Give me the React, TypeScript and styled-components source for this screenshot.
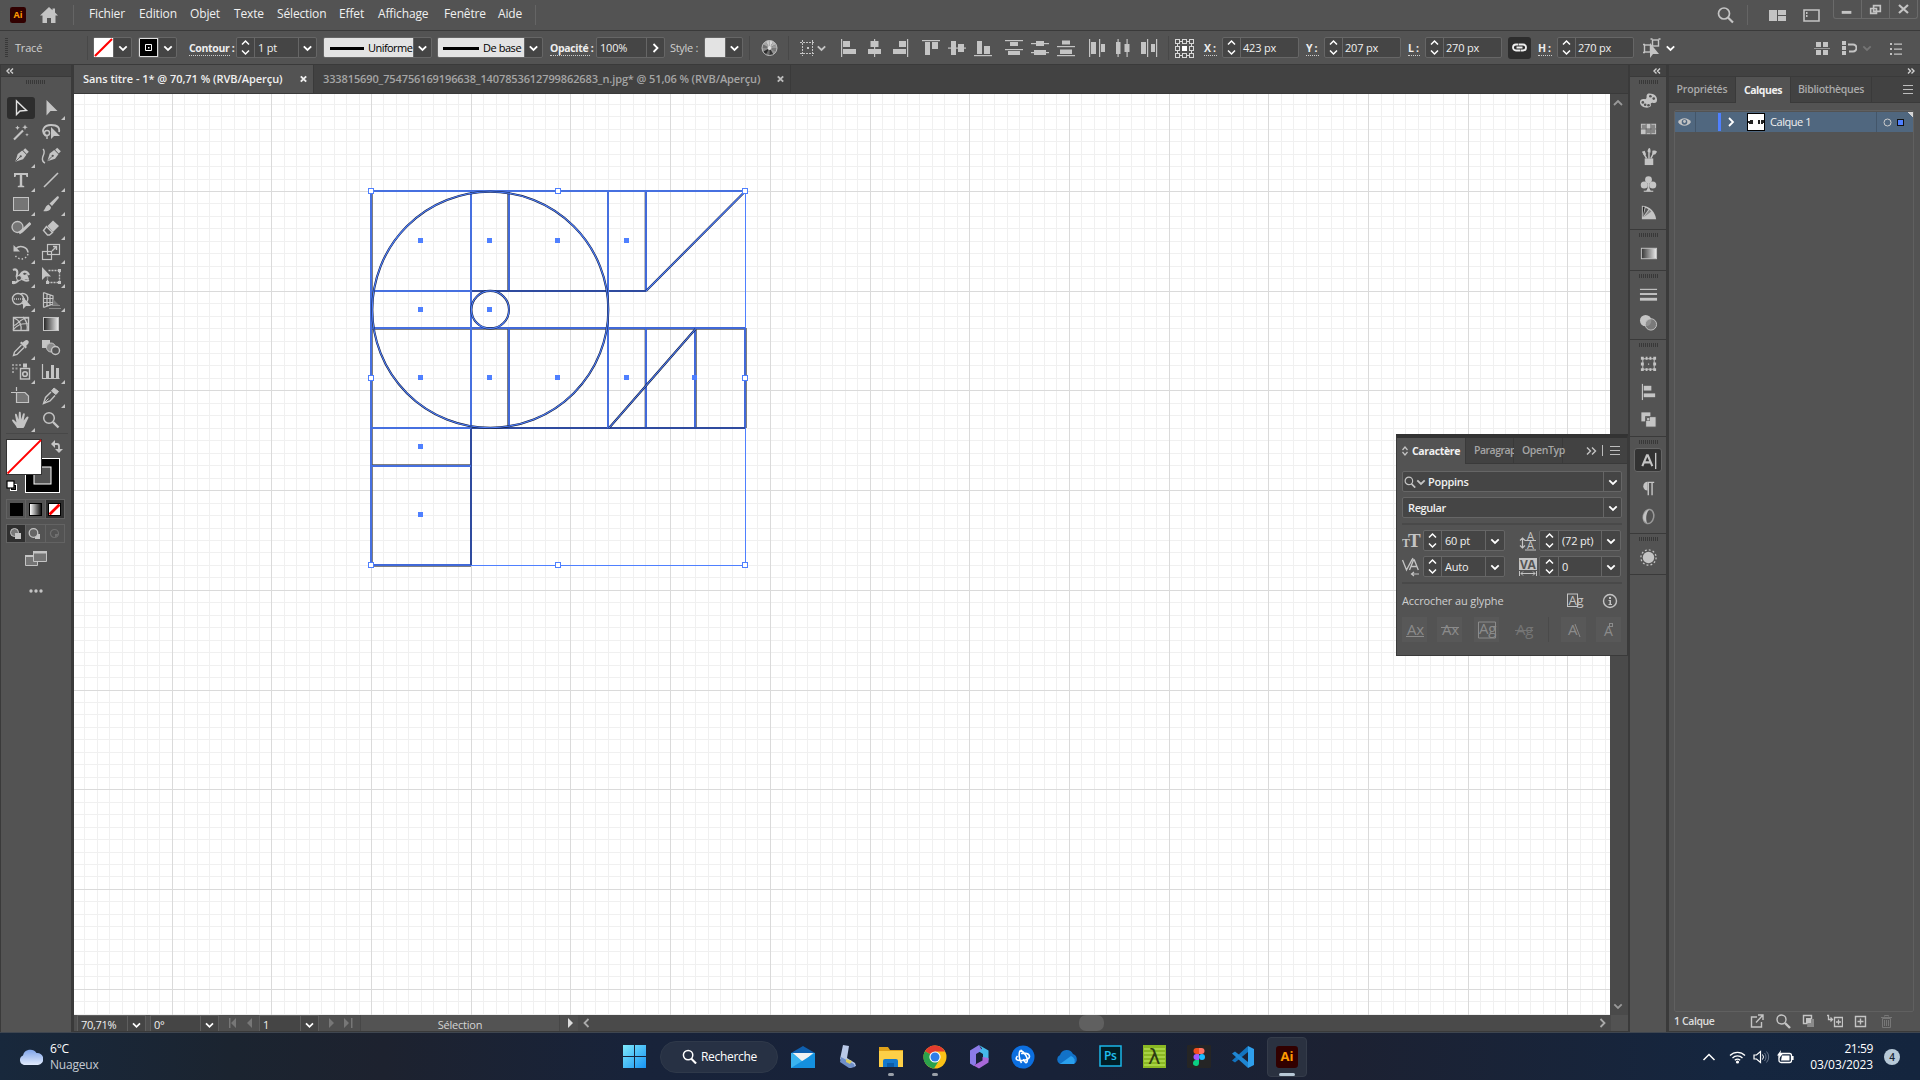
import React from "react";
import styled, { createGlobalStyle } from "styled-components";

const UI = `"Open Sans", "Noto Sans", sans-serif`;
const C = {
  bg: "#535353", dark: "#424242", line: "#3a3a3a", field: "#454545", edge: "#666666",
  icon: "#c4c4c4", text: "#f0f0f0", blue: "#4f80ff",
};

const Global = createGlobalStyle`
  html, body { margin: 0; padding: 0; background: ${C.bg}; overflow: hidden; }
  * { box-sizing: border-box; }
  body { font-family: ${UI}; font-stretch: 88%; font-size: 11px; color: ${C.text}; }
  svg { display: block; flex: none; }
`;

const Window = styled.div`width: 1920px; height: 1080px; display: flex; flex-direction: column; background: ${C.bg};`;

const Label = styled.span<{ $s?: number; $ls?: number; $c?: string; $w?: number; $b?: number; $ml?: number }>`
  font-size: ${p => p.$s ?? 11}px;
  letter-spacing: ${p => p.$ls ?? -0.2}px;
  color: ${p => p.$c ?? C.text};
  font-weight: ${p => p.$b ?? 400};
  margin-left: ${p => p.$ml ?? 0}px;
  ${p => (p.$w ? `width: ${p.$w}px;` : "")}
  white-space: nowrap;
  flex: none;
  line-height: 16px;
`;
const Gap = styled.div<{ $w: number }>`width: ${p => p.$w}px; flex: none;`;
const Grow = styled.div`flex: 1;`;

/* ---------- icons ---------- */
const Ico = ({ w = 20, h = 20, vw, vh, children, className }: any) => (
  <svg className={className} width={w} height={h} viewBox={`0 0 ${vw ?? w} ${vh ?? h}`} fill={C.icon}>{children}</svg>
);
const Chev = ({ w = 18, c = "#fff", dir = "down" }: { w?: number; c?: string; dir?: string }) => (
  <svg width={w} height={18} viewBox={`${-w / 2} -9 ${w} 18`} fill="none" stroke={c} strokeWidth="1.8">
    <path d={dir === "down" ? "M-3.700-1.700L0 2L3.700-1.700" : dir === "up" ? "M-4 2L0-2L4 2" : dir === "right" ? "M-2-4L2 0L-2 4" : "M2-4L-2 0L2 4"} />
  </svg>
);
const Dbl = ({ flip }: { flip?: boolean }) => (
  <svg width="8" height="6" viewBox="0 0 8 6" fill="none" stroke="#d0d0d0" strokeWidth="1.400">
    <path d={flip ? "M1 .5l2.500 2.500l-2.500 2.500M4.500 .5l2.500 2.500l-2.500 2.500" : "M3.500 .5l-2.500 2.500l2.500 2.500M7 .5l-2.500 2.500l2.500 2.500"} />
  </svg>
);
const Magnify = ({ s = 16, c = C.icon }: { s?: number; c?: string }) => (
  <svg width={s} height={s} viewBox="0 0 16 16" fill="none" stroke={c}>
    <circle cx="6.500" cy="6.500" r="5" strokeWidth="1.6" /><path d="M10 10.500L15 15.500" strokeWidth="2.200" />
  </svg>
);
const MenuLines = ({ c = "#bdbdbd" }: { c?: string }) => (
  <svg width="10" height="9" viewBox="0 0 10 9" fill="none" stroke={c} shapeRendering="crispEdges"><path d="M0 .5H10M0 4.500H10M0 8.500H10" /></svg>
);

/* ---------- menu bar ---------- */
const MenuBar = styled.div`height: 31px; flex: none; display: flex; align-items: flex-start; border-bottom: 1px solid ${C.line};`;
const AiBadge = styled.div<{ $s: number; $f: number }>`
  width: ${p => p.$s}px; height: ${p => p.$s}px; border-radius: ${p => p.$s / 7}px; background: #310000; color: #ff9a00;
  font-size: ${p => p.$f}px; line-height: ${p => p.$s - 1}px; font-weight: 700; text-align: center; flex: none;
`;
const VLine = styled.div<{ $h?: number; $c?: string; $mt?: number }>`
  width: 1px; height: ${p => p.$h ?? 20}px; margin-top: ${p => p.$mt ?? 0}px; background: ${p => p.$c ?? "#656565"}; flex: none;
`;
const MenuLogo = styled.div`display: flex; align-items: center; height: 30px; padding-left: 10px; width: 73px; gap: 14px;`;
const MenuItem = styled.span<{ $w: number }>`width: ${p => p.$w}px; flex: none; font-size: 12px; line-height: 28px; letter-spacing: -0.15px; white-space: nowrap;`;
const WinBtns = styled.div`
  display: flex; height: 19px; width: 85px; border: 1px solid #6a6a6a; border-top: 0; border-radius: 0 0 3px 3px;
  svg { width: 28px; border-right: 1px solid #6a6a6a; } svg:last-child { border: 0; width: 27px; }
`;
const menus: [string, number][] = [["Fichier", 50], ["Edition", 51], ["Objet", 44], ["Texte", 43], ["Sélection", 62], ["Effet", 39], ["Affichage", 66], ["Fenêtre", 54], ["Aide", 37]];

/* ---------- control bar ---------- */
const Control = styled.div`height: 34px; flex: none; display: flex; align-items: center; border-bottom: 1px solid ${C.line}; padding: 0 0 0 5px;`;
const Grip = styled.div<{ $v?: boolean }>`
  flex: none;
  ${p => p.$v
    ? "width: 3px; height: 19px; background: repeating-linear-gradient(180deg, #383838 0 1px, transparent 1px 2px);"
    : "width: 19px; height: 4px; background: repeating-linear-gradient(90deg, #383838 0 1px, transparent 1px 2px);"}
`;
const Field = styled.div<{ $w: number; $ml?: number; $mt?: number }>`
  width: ${p => p.$w}px; height: 21px; margin-left: ${p => p.$ml ?? 0}px; margin-top: ${p => p.$mt ?? 0}px; flex: none; display: flex; align-items: stretch;
  border: 1px solid ${C.edge}; border-radius: 2px; background: ${C.field}; overflow: hidden;
`;
const Seg = styled.div<{ $w?: number; $l?: boolean; $bg?: string; $p?: number }>`
  ${p => (p.$w ? `width: ${p.$w}px; flex: none;` : "flex: 1;")}
  display: flex; align-items: center; ${p => (p.$p !== undefined ? `padding-left: ${p.$p}px;` : "justify-content: center;")}
  ${p => (p.$l ? `border-left: 1px solid ${C.edge};` : "")}
  background: ${p => p.$bg ?? "transparent"};
`;
const Dotted = styled.span<{ $ml?: number; $w?: number }>`
  font-weight: 700; font-size: 10.5px; letter-spacing: -0.35px; line-height: 14px; color: #eee; border-bottom: 1px dotted #ccc; white-space: nowrap;
  margin-left: ${p => p.$ml ?? 0}px; margin-top: 1px; width: ${p => p.$w}px; flex: none;
`;
const Stepper = () => (
  <svg width="17" height="19" viewBox="0 0 17 19" fill="none" stroke="#fff" strokeWidth="1.5"><path d="M5 6.500l3.500-3.500l3.500 3.500M5 12.500l3.500 3.500l3.500-3.500" /></svg>
);
const Bar = styled.div<{ $w: number }>`width: ${p => p.$w}px; height: 3px; background: #000; margin: 2px 4px 0 0; flex: none;`;
const NumField = ({ v, ml, w = 77 }: { v: string; ml: number; w?: number }) => (
  <Field $w={w} $ml={ml}><Seg $w={17}><Stepper /></Seg><Seg $l $p={2}><Label>{v}</Label></Seg></Field>
);
const NoneSwatch = ({ s, b }: { s: number; b?: boolean }) => (
  <svg width={s} height={s} viewBox="0 0 20 20"><rect width="20" height="20" fill="#fff" /><path d="M1 19L19 1" stroke="#f00" strokeWidth={b ? 5 : 2.200} /></svg>
);
const LinkBtn = styled.div`width: 23px; height: 22px; margin-left: 6px; border-radius: 3px; background: #2d2d2d; display: flex; align-items: center; justify-content: center; flex: none;`;

const alignIcons: React.ReactNode[] = [
  <><rect x="1" width="1.200" height="18" /><rect x="3" y="2" width="7" height="6" /><rect x="3" y="10" width="13" height="5" /></>,
  <><rect x="8" width="1.200" height="18" /><rect x="4.500" y="2" width="8" height="6" /><rect x="2" y="10" width="13" height="5" /></>,
  <><rect x="15" width="1.200" height="18" /><rect x="7" y="2" width="7" height="6" /><rect x="1" y="10" width="13" height="5" /></>,
  <><rect y="1" width="18" height="1.200" /><rect x="3" y="3" width="5" height="13" /><rect x="10" y="3" width="6" height="7" /></>,
  <><rect y="8.500" width="18" height="1.200" /><rect x="3" y="2" width="5" height="14" /><rect x="10" y="5" width="6" height="8" /></>,
  <><rect y="16" width="18" height="1.200" /><rect x="3" y="2" width="5" height="13" /><rect x="10" y="7" width="6" height="8" /></>,
  <><rect y="1" width="18" height="1.200" /><rect x="5" y="3" width="8" height="4" /><rect y="10" width="18" height="1.200" /><rect x="3" y="12" width="12" height="4" /></>,
  <><rect y="4" width="18" height="1.200" /><rect x="5" y="2" width="8" height="5" /><rect y="13" width="18" height="1.200" /><rect x="3" y="11" width="12" height="5" /></>,
  <><rect y="7" width="18" height="1.200" /><rect x="5" y="1.500" width="8" height="4" /><rect y="16" width="18" height="1.200" /><rect x="3" y="10.500" width="12" height="4.500" /></>,
  <><rect x="1" width="1.200" height="18" /><rect x="3" y="3" width="5" height="12" /><rect x="11" width="1.200" height="18" /><rect x="13" y="5" width="4" height="8" /></>,
  <><rect x="3.500" width="1.200" height="18" /><rect x="2" y="3" width="4.500" height="12" /><rect x="12.500" width="1.200" height="18" /><rect x="10.500" y="5" width="5" height="8" /></>,
  <><rect x="7" width="1.200" height="18" /><rect x="1" y="3" width="5" height="12" /><rect x="16" width="1.200" height="18" /><rect x="11" y="5" width="4" height="8" /></>,
];
const AlignRow = styled.div<{ $ml: number; $g: number }>`display: flex; gap: ${p => p.$g}px; margin-left: ${p => p.$ml}px; flex: none;`;

const RefGrid = () => (
  <Ico w={20} h={20}>
    <g fill="none" stroke="#d8d8d8" strokeWidth="1.200" shapeRendering="crispEdges">
      {[1, 8, 15].map(x => [1, 8, 15].map(y => (x === 8 && y === 8 ? null : <rect key={`${x}${y}`} x={x + .5} y={y + .5} width="4" height="4" />)))}
      <path d="M5 3.500h3M12 3.500h3M5 17.500h3M12 17.500h3M3.500 5v3M3.500 12v3M17.500 5v3M17.500 12v3" />
    </g>
    <rect x="8" y="8" width="5" height="5" fill="#fff" />
  </Ico>
);

/* recolor wheel: twelve grey wedges round a light hub */
const wedgeTones = ["#d6d6d6", "#b4b4b4", "#9a9a9a", "#7a7a7a", "#8e8e8e", "#333", "#6a6a6a", "#2b2b2b", "#8a8a8a", "#6f6f6f", "#a5a5a5", "#c8c8c8"];
const Wheel = () => (
  <Ico w={17} h={18}>
    {wedgeTones.map((f, i) => {
      const a = ((i * 30 - 90) * Math.PI) / 180, b = ((i * 30 - 60) * Math.PI) / 180;
      return <path key={i} fill={f} d={`M8.500 9L${8.5 + 7.600 * Math.cos(a)} ${9 + 7.600 * Math.sin(a)}A7.600 7.600 0 0 1 ${8.5 + 7.600 * Math.cos(b)} ${9 + 7.600 * Math.sin(b)}z`} />;
    })}
    <circle cx="8.500" cy="9" r="7.500" fill="none" stroke="#bdbdbd" /><circle cx="8.500" cy="9" r="2" fill="#ddd" />
  </Ico>
);

/* ---------- workspace ---------- */
const Body = styled.div`height: 967px; flex: none; display: flex;`;
const ToolCol = styled.div`width: 74px; flex: none; border-left: 1px solid ${C.line}; border-right: 3px solid ${C.line}; display: flex; flex-direction: column; background: ${C.bg};`;
const Strip = styled.div<{ $r?: boolean }>`
  height: 12px; flex: none; background: ${C.dark}; border-bottom: 1px solid ${C.line}; display: flex; align-items: center;
  justify-content: ${p => (p.$r ? "flex-end" : "flex-start")}; padding: 0 5px;
`;
const GripWrap = styled.div`height: 7px; display: flex; align-items: flex-end; padding-left: 25px;`;
const ToolGrid = styled.div`display: grid; grid-template-columns: 30px 30px; grid-auto-rows: 24px; margin: 12px 0 0 5px;`;
const ToolCell = styled.div<{ $on?: boolean; $more?: boolean }>`
  position: relative; display: flex; align-items: center; justify-content: center;
  ${p => (p.$on ? "background: #2d2d2d; border-radius: 3px; margin: 1px 1px 1px 1px;" : "")}
  ${p => (p.$more ? `&::after { content: ""; position: absolute; right: 1px; bottom: 0; border: 2px solid ${C.icon}; border-top-color: transparent; border-left-color: transparent; }` : "")}
`;
const S = { fill: "none", stroke: C.icon, strokeWidth: 1.4 };
const pen = <g transform="rotate(45 10 10)"><rect x="7" y="0" width="6" height="3.500" /><path d="M6.500 4.500h7l1 6.500L10 19.500L5.500 11z" /><path d="M10 19V11.500" stroke={C.bg} strokeWidth="1" /><circle cx="10" cy="10.500" r="1.300" fill={C.bg} /></g>;
const tools: { i: React.ReactNode; m?: boolean; on?: boolean }[] = [
  { on: true, i: <path d="M5.500 3v13.500l3.500-3.500l6.500-.5z" {...S} stroke="#e2e2e2" /> },
  { m: true, i: <path d="M5.500 2v15.500l4-4.500h7z" /> },
  { i: <><path d="M3 17.500L12 8.500" {...S} strokeWidth="2.200" /><path d="M14 2.500l.8 2l2 .8l-2 .8l-.8 2l-.8-2l-2-.8l2-.8zM6.500 3.500l.7 1.600l1.600.7l-1.600.7l-.7 1.600l-.7-1.600l-1.600-.7l1.600-.7zM16 11l.5 1.300l1.300.5l-1.300.5l-.5 1.300l-.5-1.300l-1.300-.5l1.300-.5z" /></> },
  { i: <><path d="M5 14C-1 9 3 3 10 3s9 3 8 7" {...S} strokeWidth="1.800" /><circle cx="6" cy="11" r="2.500" {...S} /><path d="M6 13v4" {...S} /><path d="M10 5v12l3-3h6z" /></> },
  { m: true, i: <g transform="translate(1.500 1.500) scale(.85)">{pen}</g> },
  { i: <><g transform="translate(3.500 1) scale(.85)">{pen}</g><path d="M2 3C5 6 2 9 1.500 12S2 16 4 17" {...S} /></> },
  { m: true, i: <path d="M3 3h14v4h-1.500l-.6-2H11.200v10.500l2 .5v1.200H6.800V16l2-.5V5H5.100l-.6 2H3z" /> },
  { m: true, i: <path d="M3 17L17 3" {...S} strokeWidth="1.600" /> },
  { m: true, i: <rect x="2.500" y="3.500" width="15" height="13" fill="#757575" stroke={C.icon} /> },
  { m: true, i: <><path d="M17.500 2.500c1 1 0 2-1 3L11 12L8.500 9.500L15 3.500c1-1 1.700-1.700 2.500-1z" /><path d="M7.500 10.500l2.500 2.500c0 4-5 5-8 4c2-.5 2-5 5.500-6.500z" /></> },
  { m: true, i: <><circle cx="6.500" cy="9" r="5.500" fill="#757575" stroke={C.icon} strokeWidth="1.300" /><path d="M19.500 5L11 13l-3 2" {...S} strokeWidth="3" /></> },
  { m: true, i: <><path d="M12 2.500l6 5.500L12 14L6.500 8z" /><path d="M5.500 8.500L2.500 12.500l4 4.500h2l3-2.500z" {...S} /></> },
  { m: true, i: <><path d="M5 6.500A7 6.500 0 0 1 17 10.500" {...S} strokeWidth="1.600" /><path d="M2.500 3v6.500h6.500z" /><path d="M17 12a7 7 0 0 1-13 1" {...S} strokeDasharray="1.500 2" /></> },
  { m: true, i: <><rect x="6.500" y="2.500" width="12" height="10" {...S} strokeWidth="1.200" /><rect x="1.500" y="9.500" width="9" height="8" {...S} strokeWidth="1.200" /><path d="M11 9l4-4M12 4.500h3.500V8" {...S} /></> },
  { m: true, i: <><path d="M2 4c4-2 5 2 4 5s1 3 3 0s6-6 9 0M2 17c4 1 5-4 8-4s4 3 8 1" {...S} strokeWidth="2.200" /><path d="M11 6l2 3l3-1l2 5h-6l-3-3z" /><circle cx="8" cy="12" r="2.500" fill={C.bg} stroke={C.icon} /><rect x="1" y="15" width="3" height="3" /></> },
  { m: true, i: <><path d="M7.500 4.500h11v12h-12v-5" {...S} strokeDasharray="2 1" /><path d="M1 1v13l3.500-3.500H10z" /><path d="M17 3h3v3h-3zM17 15h3v3h-3zM5 15h3v3H5z" /></> },
  { m: true, i: <><circle cx="7" cy="9" r="5.500" {...S} /><path d="M9 4.500a5 5 0 1 1 2 9" {...S} /><path d="M3 9h12" {...S} strokeDasharray="1 1" /><path d="M12 7v12l3-3h5z" /></> },
  { m: true, i: <><path d="M2.500 2.500v15M2.500 2.500L12 6v8L2.500 17.500M6 4v12M9 5v10M2.500 8.500H12M2.500 12.500H12" {...S} strokeWidth="1.200" /><path d="M12 9l6 6H12z" fill="#777" /><path d="M8 18.500h12M11 15.500h8" stroke="#8a8a8a" /></> },
  { i: <><rect x="2.500" y="3.500" width="15" height="13" {...S} /><path d="M2 12c6-1 6-8 15-8M3 4c6 2 8 8 7 13M12 3c4 4 5 8 4 14M2 16c4-5 8-7 16-6" {...S} strokeWidth="1.200" /></> },
  { i: <><defs><linearGradient id="gt"><stop offset="0" stopColor="#222" /><stop offset="1" stopColor="#eee" /></linearGradient></defs><rect x="2.500" y="3.500" width="15" height="13" fill="url(#gt)" stroke={C.icon} /></> },
  { m: true, i: <><path d="M17 2.500c1.500 1.500.5 3-.5 4l-1.500 1.500l1 1l-1.500 1.500l-5.500-5.500L10.500 3.500l1 1l2-1.500c1-1 2.500-1.500 3.500-.5z" /><path d="M10.500 7L3.500 14L2.500 17.500l3.500-1L13 9.500" {...S} /></> },
  { i: <><rect x="1" y="2" width="8" height="8" /><circle cx="10" cy="9.500" r="4.500" fill="#8a8a8a" stroke={C.icon} /><circle cx="14.500" cy="12.500" r="4" fill={C.bg} stroke={C.icon} strokeWidth="1.400" /></> },
  { m: true, i: <><path d="M1 2h2v2H1zM4.500 2h2v2h-2zM8 2h2v2H8zM1 5.500h2v2H1zM4.500 5.500h2v2h-2zM1 9h2v2H1z" fill="#999" /><rect x="9.500" y="6.500" width="9" height="10.500" {...S} /><rect x="12" y="1.500" width="4" height="4" /><circle cx="14" cy="12" r="2.300" {...S} strokeWidth="1.600" /></> },
  { m: true, i: <><path d="M1.500 2v14.500h17" {...S} strokeWidth="1.200" /><path d="M5 9h3v7H5zM10 3h3v13h-3zM15 6h3v10h-3z" /></> },
  { i: <><path d="M0 6.500h5M5.500 1v4" {...S} strokeWidth="1.200" /><path d="M5.500 6.500h8.500l3.500 3.500v6.500h-12z" fill="#757575" stroke={C.icon} strokeWidth="1.200" /></> },
  { m: true, i: <><path d="M13 2l4.500 3.500l-2.500 3L10.500 5z" fill={C.icon} stroke={C.icon} /><path d="M10 6L4.500 11.500L2.500 17.500l6.500-2.500L14 9.500" {...S} /><path d="M2.500 17.500l5-5" {...S} strokeWidth="1" /></> },
  { m: true, i: <path d="M6 18c-1-3-4-5-5-7.500c0-1.500 1.700-1 2.500 0L5.500 12.500L4 5c-.2-1.500 1.500-1.700 1.900-.3L7.500 9.500L7.800 3c0-1.600 1.900-1.600 2 0l.4 6.500l1.700-5.500c.4-1.400 2.100-1 1.900.5L12.700 10.500L15.500 7c1-1.200 2.500-.3 1.900 1L14.500 14c-.5 2-1.500 3-2 4z" /> },
  { i: <><circle cx="8" cy="8" r="5.300" {...S} strokeWidth="1.500" /><path d="M12 12l5.500 5.500" {...S} strokeWidth="2.400" /></> },
];

const ToolBottom = styled.div`margin: 1px 3px 0 5px; border-top: 1px solid #484848; display: flex; flex-direction: column;`;
const Trio = styled.div<{ $mt: number; $h: number; $on: number }>`
  display: flex; width: 59px; height: ${p => p.$h}px; margin: ${p => p.$mt}px 0 0 0; border: 1px solid #636363;
  > div { flex: 1; display: flex; align-items: center; justify-content: center; border-right: 1px solid #636363; }
  > div:last-child { border: 0; }
  > div:nth-child(${p => p.$on}) { background: #2f2f2f; }
`;
const Chip = styled.div<{ $bg: string }>`width: 13px; height: 13px; border: 1px solid #000; background: ${p => p.$bg};`;
const ScreenMode = styled.div`margin: 8px 0 0 19px; display: flex; flex-direction: column; gap: 22px; svg:last-child { margin-left: 4px; }`;

/* ---------- document ---------- */
const DocCol = styled.div`width: 1554px; flex: none; display: flex; flex-direction: column; position: relative; background: ${C.dark};`;
const Tabs = styled.div`height: 29px; flex: none; display: flex; border-bottom: 1px solid ${C.line};`;
const Tab = styled.div<{ $w: number; $on?: boolean }>`
  width: ${p => p.$w}px; display: flex; align-items: center; justify-content: space-between; padding: 0 6px 0 9px;
  background: ${p => (p.$on ? C.bg : "transparent")}; border-right: 1px solid ${C.line};
`;
const CloseX = ({ c }: { c: string }) => (
  <svg width="7" height="8" viewBox="0 0 7 8" stroke={c} strokeWidth="1.900"><path d="M.8 1.300l5.400 5.400M6.200 1.300L.8 6.700" /></svg>
);
const CanvasRow = styled.div`height: 921px; flex: none; display: flex;`;
const VScroll = styled.div`width: 18px; background: #4a4a4a; display: flex; flex-direction: column; justify-content: space-between; align-items: center; flex: none; padding-right: 2px;`;
const Status = styled.div`height: 17px; flex: none; display: flex; align-items: stretch; background: #4f4f4f; border-bottom: 1px solid ${C.line}; overflow: hidden;`;
const StatusField = styled.div<{ $w: number; $ml: number }>`
  width: ${p => p.$w}px; height: 18px; margin-left: ${p => p.$ml}px; flex: none; display: flex; align-items: center; justify-content: space-between;
  background: ${C.field}; border: 1px solid #5e5e5e; border-bottom: 0; padding: 1px 0 0 3px; svg { border-left: 1px solid #5e5e5e; }
`;
const SelBox = styled.div`width: 200px; height: 18px; padding-top: 1px; margin-left: 4px; flex: none; border: 1px solid #474747; border-width: 0 1px; background: ${C.bg}; display: flex; align-items: center; justify-content: center;`;
const HScroll = styled.div`flex: 1; background: #4a4a4a; display: flex; align-items: center; border-right: 17px solid #525252;`;
const Thumb = styled.div`width: 25px; height: 16px; border-radius: 7px; background: #606060; flex: none;`;

const X0 = 74, Y0 = 94, CW = 1536, CH = 921;
const gridPath = (major: boolean) => {
  let d = "";
  for (let k = -24; k < 104; k++) {
    if ((k % 8 === 0) !== major) continue;
    const x = Math.floor(371.5 + k * 12.463) - X0 + 0.5;
    if (x > 0 && x < CW) d += `M${x} 0V${CH}`;
  }
  for (let k = -8; k < 70; k++) {
    if ((k % 8 === 0) !== major) continue;
    const y = Math.floor(191.5 + k * 12.463) - Y0 + 0.5;
    if (y > 0 && y < CH) d += `M0 ${y}H${CW}`;
  }
  return d;
};
const minorGrid = gridPath(false);
const majorGrid = gridPath(true);
const blueLines = "M371 191H745M371 191V565M471 191V428M608 191V428M371 291H471M371 328H471M371 428H471M371 466H471";
const mixLines = "M509 191V291M646 191V291M509 328V428M646 328V428M695 328V428M745 328V428M471 328H745M371 565H471";
const mixShade = "M507.500 191V291M645 191V291M507.500 328V428M645 328V428M696.500 328V428M746.500 328V428M471 329.500H745M371 566.500H471M371 329.500H471M371 464.500H471M372.500 191V565";
const deepLines = "M471 291H646M471 291V328M471 428H745M471 428V565";
const centers: [number, number][] = [[420, 240], [489, 240], [557, 240], [626, 240], [420, 309], [489, 309], [420, 377], [489, 377], [557, 377], [626, 377], [694, 377], [420, 446], [420, 514]];
const handles: [number, number][] = [[371, 191], [558, 191], [745, 191], [371, 378], [745, 378], [371, 565], [558, 565], [745, 565]];
const curves = (
  <>
    <circle cx="490.300" cy="309.700" r="118" /><circle cx="490.200" cy="309.700" r="18.800" /><path d="M646 291L745 191.500M609 428L695.500 329" />
  </>
);

const Artboard = () => (
  <svg width={CW} height={CH} viewBox={`${X0} ${Y0} ${CW} ${CH}`}>
    <rect x={X0} y={Y0} width={CW} height={CH} fill="#fff" />
    <g transform={`translate(${X0} ${Y0})`}>
      <path d={minorGrid} stroke="#f0f0f0" /><path d={majorGrid} stroke="#dadada" />
    </g>
    <g fill="none">
      <path d="M745.500 191V565.500H371" stroke={C.blue} />
      <path d={mixShade} stroke="#555" strokeOpacity=".75" />
      <path d={mixLines} stroke="#4169d8" strokeWidth="2" />
      <path d={deepLines} stroke="#2f4b9f" strokeWidth="2" />
      <path d={blueLines} stroke="#4670e0" strokeWidth="2" />
      <g stroke="#141c38" strokeWidth="2.100">{curves}</g>
      <g stroke={C.blue} strokeWidth="1.100">{curves}</g>
    </g>
    {centers.map(([x, y], i) => <rect key={i} x={x - 2} y={y - 2} width="5" height="5" fill={C.blue} />)}
    {handles.map(([x, y], i) => <rect key={i} x={x - 2.500} y={y - 2.500} width="5" height="5" fill="#fff" stroke={C.blue} />)}
  </svg>
);

/* ---------- character panel ---------- */
const CharPanel = styled.div`position: absolute; left: 1322px; top: 369px; width: 232px; height: 222px; background: ${C.bg}; border: 1px solid ${C.line}; border-top: 4px solid #333; display: flex; flex-direction: column;`;
const CharTabs = styled.div`height: 26px; flex: none; display: flex; align-items: stretch; background: ${C.dark};`;
const CharTab = styled.div<{ $w: number; $on?: boolean; $p: number }>`
  width: ${p => p.$w}px; flex: none; display: flex; align-items: center; padding: 0 0 1px ${p => p.$p}px; gap: 4px;
  background: ${p => (p.$on ? C.bg : C.dark)}; border-right: 1px solid ${C.line}; ${p => (p.$on ? "" : `border-bottom: 1px solid ${C.line};`)}
`;
const CharTail = styled.div`flex: 1; display: flex; align-items: center; border-bottom: 1px solid ${C.line}; padding-left: 23px;`;
const CharBody = styled.div`padding: 7px 5px 0; display: flex; flex-direction: column;`;
const CharRow = styled.div<{ $mt?: number }>`display: flex; align-items: center; margin-top: ${p => p.$mt ?? 0}px;`;
const HRule = styled.div<{ $m: string }>`height: 2px; background: #494949; margin: ${p => p.$m};`;
const GlyphBtn = styled.div<{ $ml: number; $flat?: boolean }>`
  width: 25px; height: 25px; margin-left: ${p => p.$ml}px; flex: none; display: flex; align-items: center; justify-content: center;
  background: ${p => (p.$flat ? "transparent" : "#585858")};
`;
const IcoText = ({ x = 0, y = 14, s = 13, c = C.icon, b = 400, children }: any) => (
  <text x={x} y={y} fontSize={s} fill={c} fontWeight={b} fontFamily="Open Sans, sans-serif" letterSpacing="-0.3">{children}</text>
);
const G = "#8b8b8b";

/* ---------- right docks ---------- */
const Dock = styled.div`width: 39px; flex: none; display: flex; flex-direction: column; border-left: 2px solid ${C.line}; border-right: 1px solid ${C.line};`;
const DockGroup = styled.div<{ $h: number }>`height: ${p => p.$h}px; flex: none; border-bottom: 1px solid ${C.line}; display: flex; flex-direction: column; align-items: center; padding-top: 3px;`;
const DockIcon = styled.div<{ $on?: boolean }>`
  width: 28px; height: 24px; margin-top: 4px; flex: none; display: flex; align-items: center; justify-content: center; border-radius: 3px;
  ${p => (p.$on ? "background: #333; border: 1px solid #666;" : "")}
`;
const dockGroups: { h: number; items: { on?: boolean; i: React.ReactNode }[] }[] = [
  { h: 153, items: [
    { i: <><path d="M11 2.500c5 0 8 3 8 6.500s-2 4-4 3.500s-3 .5-2.500 2s-1 3-4 3C4 17.500 1 15 1 11.500C1 9 3.500 8 5.500 8.500S8 7.500 8 6s0-3.500 3-3.500z" /><g fill={C.bg}><circle cx="12" cy="5.500" r="1.400" /><circle cx="15.500" cy="8" r="1.400" /><circle cx="4" cy="12" r="1.400" /><circle cx="6.500" cy="14.500" r="1.400" /><circle cx="10" cy="15" r="1.400" /></g></> },
    { i: <><rect x="2" y="5" width="16" height="11" /><g fill="#858585"><rect x="3" y="6" width="4" height="4" /><rect x="13" y="6" width="4" height="4" /><rect x="8" y="11" width="4" height="4" /><rect x="13" y="11" width="4" height="4" /></g><path d="M7.500 5v11M12.500 5v11M2 10.500h16" stroke={C.bg} strokeWidth=".8" /></> },
    { i: <><path d="M6 12h9v7H6z" /><path d="M10.500 12V4M8 12L5 7M12.500 12l3-6" {...S} strokeWidth="1.500" /><path d="M9 5c0-2 1-4 2-4s1.500 3 1 5zM3 5l3-1l1.500 4l-2 1zM14 4c3-1 4 0 5 1l-2 3h-3z" /></> },
    { i: <><circle cx="10" cy="5" r="3.600" /><circle cx="5.500" cy="10.500" r="3.700" /><circle cx="14.500" cy="10.500" r="3.700" /><path d="M9 8h2v6l1.500 3h-5L9 14z" /><rect x="5" y="16.500" width="10" height="1.200" /></> },
    { i: <><path d="M3 3c9 0 14 7 15 14H3z" /><path d="M4 4v11l2-11z" fill="#222" /><path d="M4 15L7 5l3 1.500z" fill="#555" /><path d="M5 15l6-8l2 2z" fill="#888" /></> },
  ] },
  { h: 41, items: [{ i: <><defs><linearGradient id="gd"><stop offset="0" stopColor="#333" /><stop offset="1" stopColor="#eee" /></linearGradient></defs><rect x="2.500" y="4.500" width="16" height="11" fill="url(#gd)" stroke={C.icon} /></> }] },
  { h: 69, items: [
    { i: <><rect x="1" y="4" width="18" height="1.200" /><rect x="1" y="8.500" width="18" height="2" /><rect x="1" y="13.500" width="18" height="3" /></> },
    { i: <><circle cx="7" cy="8" r="6" /><circle cx="12.500" cy="12" r="6" fill="#858585" fillOpacity=".8" stroke={C.icon} /></> },
  ] },
  { h: 97, items: [
    { i: <><rect x="4" y="5" width="12" height="11" {...S} strokeWidth="1" /><path d="M2 3h3v3H2zM7 3h2v3H7zM11 3h2v3h-2zM15 3h3v3h-3zM2 15h3v3H2zM7 15h2v3H7zM11 15h2v3h-2zM15 15h3v3h-3zM2 9h3v3H2zM15 9h3v3h-3zM9.500 10h1.200v1.200H9.500z" /></> },
    { i: <><rect x="3" y="2" width="1.200" height="17" /><rect x="5" y="4" width="8" height="5" /><rect x="5" y="12" width="12" height="4" /></> },
    { i: <><rect x="2.500" y="2.500" width="9.500" height="9.500" /><rect x="7" y="7" width="11" height="11" stroke={C.bg} /><rect x="7.500" y="7.500" width="4" height="4" fill={C.bg} /><rect x="8.500" y="8.500" width="2.500" height="2.500" /></> },
  ] },
  { h: 97, items: [
    { on: true, i: <><path d="M3.500 16L8.300 4.500h1L14 16M5.500 12h6.500" {...S} strokeWidth="2.200" /><rect x="17" y="2" width="1.200" height="17" fill="#e0e0e0" /></> },
    { i: <><path d="M9 3h7v1.200H9zM9 3h1.500v14H9zM13 3h1.500v14H13z" /><path d="M9 3a4.500 4.500 0 0 0 0 9z" /></> },
    { i: <><ellipse cx="10" cy="10" rx="5.500" ry="7.500" transform="rotate(12 10 10)" {...S} stroke="#999" strokeWidth="1.600" /><path d="M6 15C2 11 6 3 11 2.500C8 5 6.500 11 8.500 17z" /></> },
  ] },
  { h: 41, items: [{ i: <><circle cx="10" cy="10" r="6" /><circle cx="10" cy="10" r="8" {...S} strokeDasharray="2 2.200" strokeWidth="1.300" /></> }] },
];

const LayersPanel = styled.div`width: 253px; flex: none; display: flex; flex-direction: column; border-left: 2px solid ${C.line};`;
const PTabs = styled.div`height: 26px; flex: none; display: flex; background: ${C.dark};`;
const PTab = styled.div<{ $w: number; $on?: boolean }>`
  width: ${p => p.$w}px; flex: none; display: flex; align-items: center; justify-content: center; border-right: 1px solid ${C.line}; padding-bottom: 1px;
  ${p => (p.$on ? `background: ${C.bg};` : `border-bottom: 1px solid ${C.line};`)}
`;
const PTail = styled.div`flex: 1; display: flex; align-items: center; justify-content: flex-end; padding-right: 7px; border-bottom: 1px solid ${C.line};`;
const LayerList = styled.div`flex: 1; margin: 7px 6px 0 5px; border: 1px solid #606060; border-radius: 2px; display: flex; flex-direction: column;`;
const LayerRow = styled.div`
  height: 20px; margin-top: 1px; flex: none; background: #50677f; display: flex; align-items: center;
  background-image: linear-gradient(225deg, #d4d4d4 4px, transparent 4px);
`;
const BlueBar = styled.div`width: 3px; height: 18px; background: ${C.blue};`;
const SelDot = styled.div`width: 7px; height: 7px; background: ${C.blue}; border: 1px solid #111;`;
const Thumbnail = styled.div`width: 18px; height: 18px; background: #fff; border: 1px solid #000; display: flex; align-items: center; justify-content: center;`;
const LayerFoot = styled.div`height: 20px; flex: none; display: flex; align-items: center; border-bottom: 1px solid ${C.line}; padding: 0 25px 1px 5px;`;
const FootIcons = styled.div`display: flex; gap: 10px; margin-left: auto;`;

/* ---------- taskbar ---------- */
const Taskbar = styled.div`
  height: 48px; flex: none; display: flex; align-items: center; border-top: 1px solid #3f4650;
  background: linear-gradient(90deg, #18283c 0%, #1b2430 12%, #1d222f 20%, #18233a 33%, #182238 55%, #1c2132 70%, #15263f 90%, #14253e 100%);
`;
const TaskLeft = styled.div`width: 604px; flex: none; display: flex; align-items: center;`;
const Stack = styled.div<{ $r?: boolean; $ml: number }>`display: flex; flex-direction: column; margin-left: ${p => p.$ml}px; text-align: ${p => (p.$r ? "right" : "left")};`;
const TaskCenter = styled.div`display: flex; align-items: center;`;
const Pill = styled.div`width: 118px; height: 32px; margin: 0 5px 0 14px; border-radius: 16px; background: #273144; border: 1px solid #2f394a; display: flex; align-items: center; padding-left: 21px; gap: 4px; flex: none;`;
const AppRow = styled.div`display: flex; align-items: center; gap: 4px;`;
const AppSlot = styled.div<{ $dot?: boolean; $on?: boolean }>`
  width: 40px; height: 40px; display: flex; align-items: center; justify-content: center; position: relative; border-radius: 4px; flex: none;
  ${p => (p.$on ? "background: #2a3140; border: 1px solid #353c4a;" : "")}
  ${p => (p.$dot || p.$on ? `&::after { content: ""; position: absolute; bottom: ${p.$on ? 0 : 1}px; height: 3px; border-radius: 2px; width: ${p.$on ? 16 : 6}px; background: ${p.$on ? "#b8c8d6" : "#9aa0a8"}; }` : "")}
`;
const Badge = styled.div`width: 16px; height: 16px; border-radius: 8px; background: #b7c9d8; color: #1a2636; font-size: 10px; line-height: 16px; text-align: center; margin-left: 11px; font-weight: 600;`;

const apps: { dot?: boolean; i: React.ReactNode }[] = [
  { i: <><path d="M0 8L12 1l12 7z" fill="#0f5fae" /><path d="M0 8h24v15H0z" fill="#35b1ee" /><path d="M2 8h20L12 17z" fill="#f2f2f2" /><path d="M0 8l12 9L24 8v15H0z" fill="#3ab4f0" /><path d="M2 8h20L12 16z" fill="#f2f2f2" /><path d="M0 23L24 8v15z" fill="#1490df" /></> },
  { i: <><path d="M8 0l6 1l-2 12l8 5l1 3l-6 2L5 14z" fill="#b9c9e8" /><path d="M6 12l13 7l1 3l-6 1L5 17z" fill="#6f8fc8" /><path d="M11 14l6 2l-2 3l-4-2z" fill="#d9cc5c" /></> },
  { dot: true, i: <><path d="M0 2h9l2 3h13v5H0z" fill="#e0a21a" /><path d="M0 6h24v16H0z" fill="#fdcf47" /><path d="M4 16a2 2 0 0 1 2-2h11a2 2 0 0 1 2 2v6H4z" fill="#1478cc" /><path d="M8 18h7v4H8z" fill="#0c5ca8" /></> },
  { dot: true, i: <><circle cx="12" cy="12" r="11.500" fill="#fbc116" /><path d="M12 12L2 6.200A11.500 11.500 0 0 1 22 6.500H12z" fill="#e33b2e" /><path d="M12 12L2 6.200A11.500 11.500 0 0 0 11 23.500L17 14z" fill="#2ba24c" /><circle cx="12" cy="12" r="5.600" fill="#fff" /><circle cx="12" cy="12" r="4.500" fill="#2f7de8" /></> },
  { i: <><path d="M12 0L3 5.500v13L7 21l2-2.500V9l6-3.500z" fill="#8b7be8" /><path d="M12 0l9.500 5.500v10L16 13V9l-4-2.500l3-3z" fill="#45b8ea" /><path d="M21.500 13v4.500L12 23.500L6.500 20.500l9-5V12z" fill="#a868d8" /></> },
  { i: <><circle cx="12" cy="12" r="11.500" fill="#0c6fe0" /><g fill="none" stroke="#fff" strokeWidth="1.600"><path d="M9.500 5c4 2.500 8 8 6.500 12c-1 2-3-1-3.500-3M9 5.500c-1.500 3-1 9 1.500 12.500M10 8.500c4-1 8.500 0 8.500 3s-7 5-12 3.500c-2-.5-1.500-2.500 0-4" /></g></> },
  { i: <><path d="M5 19a5 5 0 0 1 0-9a7 7 0 0 1 13-1a5.500 5.500 0 0 1 1 10z" fill="#1272c8" /><path d="M5 19l11-8a5.500 5.500 0 0 1 3 8z" fill="#2aa0ee" /></> },
  { i: <><rect x="1" y="1" width="21" height="20" fill="#001e26" stroke="#1ab6e8" strokeWidth="1.500" /><text x="5" y="15" fontSize="12" fontWeight="600" fontFamily="Open Sans" letterSpacing="-.5" fill="#20c0f0">Ps</text></> },
  { i: <><rect x="0" y="0" width="23" height="23" fill="#8ab823" /><path d="M1 4h21M1 8h21M1 12h21M1 16h21M1 20h21" stroke="#a7d344" strokeWidth="2" /><text x="5" y="19" fontSize="21" fontFamily="DejaVu Sans" fill="#2d3a12">λ</text></> },
  { i: <><rect width="24" height="23" rx="1" fill="#252525" /><path d="M12 3H9.500a3 3 0 0 0 0 6H12z" fill="#f24e1e" /><path d="M12 3h2.500a3 3 0 0 1 0 6H12z" fill="#ff7262" /><path d="M12 9H9.500a3 3 0 0 0 0 6H12z" fill="#a259ff" /><circle cx="15" cy="12" r="3" fill="#1abcfe" /><path d="M12 15H9.500a3 3 0 1 0 2.500 3z" fill="#0acf83" /></> },
  { i: <><path d="M17 1l6 3v16l-6 3z" fill="#2f9fec" /><path d="M17 1v6L4 17.500L1 15.500z" fill="#1374bf" /><path d="M17 23v-6L4 6.500L1 8.500z" fill="#1f86d2" /></> },
];

const StatusIcon = ({ d, w, c = "#777" }: { d: string; w: number; c?: string }) => <Ico w={w} h={20}><path d={d} fill={c} /></Ico>;

export default function App() {
  return (
    <Window>
      <Global />
      <MenuBar>
        <MenuLogo>
          <AiBadge $s={16} $f={9}>Ai</AiBadge>
          <Ico w={18} h={16}><path d="M9 0L0 8.500h2.500V16H7v-5h4v5h4.500V8.500H18L15 5.600V1.500h-2.500v1.800z" /></Ico>
        </MenuLogo>
        <VLine $mt={5} /><Gap $w={15} />
        {menus.map(([t, w]) => <MenuItem key={t} $w={w}>{t}</MenuItem>)}
        <VLine $mt={5} />
        <Grow />
        <Ico w={17} h={30}><g transform="translate(0 7)" fill="none" stroke={C.icon}><circle cx="7" cy="6.500" r="5.500" strokeWidth="1.700" /><path d="M11 10.500l5 5" strokeWidth="2.200" /></g></Ico>
        <Gap $w={13} /><VLine $mt={5} /><Gap $w={20} />
        <Ico w={18} h={30}><path d="M1 10h8v11H1zM10 10h8v5h-8zM10 16h8v5h-8z" /></Ico>
        <Gap $w={16} />
        <Ico w={18} h={30}><path d="M2 10h15v11H2z" {...S} strokeWidth="1.600" /><path d="M4 12h1.500v2H4zM4 15h1.500v2H4z" /></Ico>
        <Gap $w={13} />
        <WinBtns>
          <Ico w={28} h={18}><rect x="8" y="11" width="10" height="3" /></Ico>
          <Ico w={28} h={18}><path d="M12 5.500h7v6h-7zM9 8.500h6v5H9z" {...S} strokeWidth="1.700" /></Ico>
          <Ico w={27} h={18}><path d="M9 5l9 8M18 5l-9 8" {...S} strokeWidth="2.200" /></Ico>
        </WinBtns>
        <Gap $w={2} />
      </MenuBar>

      <Control>
        <Grip $v />
        <Label $ml={7} $w={72} $c="#cfcfcf">Tracé</Label>
        <VLine $h={24} $c="#484848" /><Gap $w={5} />
        <Field $w={39}><Seg $w={19} $bg="#fff"><NoneSwatch s={19} /></Seg><Seg $l><Chev /></Seg></Field>
        <Field $w={39} $ml={6}><Seg $w={19} $bg="#000"><Ico w={19} h={19}><rect width="19" height="19" fill="#ddd" /><rect x="1" y="1" width="17" height="17" fill="#000" /><path d="M6.500 6.500h6v6h-6z" stroke="#fff" fill="none" /><path d="M9 9h1.500v1.500H9z" fill="#fff" /></Ico></Seg><Seg $l><Chev /></Seg></Field>
        <Dotted $ml={12} $w={41}>Contour :</Dotted>
        <Field $w={81} $ml={6}><Seg $w={17}><Stepper /></Seg><Seg $l $p={3}><Label>1 pt</Label></Seg><Seg $w={18} $l><Chev w={17} /></Seg></Field>
        <Field $w={109} $ml={6}><Seg $bg="#e3e3e3" $p={6}><Bar $w={34} /><Label $c="#000" $ls={-0.55}>Uniforme</Label></Seg><Seg $w={18} $l><Chev w={17} /></Seg></Field>
        <Field $w={106} $ml={5}><Seg $bg="#e3e3e3" $p={5}><Bar $w={36} /><Label $c="#000" $ls={-0.45}>De base</Label></Seg><Seg $w={18} $l><Chev w={17} /></Seg></Field>
        <Dotted $ml={7} $w={40}>Opacité :</Dotted>
        <Field $w={69} $ml={6}><Seg $p={3}><Label>100%</Label></Seg><Seg $w={18} $l><Chev w={17} dir="right" /></Seg></Field>
        <Label $ml={5} $w={34} $c="#cfcfcf" $ls={-0.3}>Style :</Label>
        <Field $w={39}><Seg $w={20} $bg="#e3e3e3" /><Seg $l><Chev w={17} /></Seg></Field>
        <Gap $w={6} /><VLine $h={24} $c="#484848" /><Gap $w={11} />
        <Wheel />
        <Gap $w={10} /><VLine $h={24} $c="#484848" /><Gap $w={11} />
        <Ico w={16} h={18}><path d="M2.500 1v16M12.500 1v16M0 3.500h15M0 14.500h15" {...S} strokeWidth="1" strokeDasharray="2 1" /><rect x="7" y="8" width="2" height="2" /></Ico>
        <Chev w={11} c={C.icon} />
        <AlignRow $ml={13} $g={9}>{alignIcons.slice(0, 3).map((n, i) => <Ico key={i} w={17} h={18}>{n}</Ico>)}</AlignRow>
        <AlignRow $ml={13} $g={8}>{alignIcons.slice(3, 6).map((n, i) => <Ico key={i} w={18} h={18}>{n}</Ico>)}</AlignRow>
        <AlignRow $ml={13} $g={8}>{alignIcons.slice(6, 9).map((n, i) => <Ico key={i} w={18} h={18}>{n}</Ico>)}</AlignRow>
        <AlignRow $ml={13} $g={8}>{alignIcons.slice(9).map((n, i) => <Ico key={i} w={18} h={18}>{n}</Ico>)}</AlignRow>
        <Gap $w={10} /><VLine $h={24} $c="#484848" /><Gap $w={5} />
        <RefGrid />
        <Dotted $ml={10} $w={13}>X :</Dotted><NumField v="423 px" ml={5} />
        <Dotted $ml={7} $w={13}>Y :</Dotted><NumField v="207 px" ml={5} />
        <Dotted $ml={7} $w={12}>L :</Dotted><NumField v="270 px" ml={5} />
        <LinkBtn><Ico w={17} h={12}><path d="M9 8.500H5a3 3 0 0 1 0-6h2.500M8 2.500h4a3 3 0 0 1 0 6H9.500M5.500 5.500h6" {...S} stroke="#eee" strokeWidth="1.800" /></Ico></LinkBtn>
        <Dotted $ml={7} $w={14}>H :</Dotted><NumField v="270 px" ml={5} />
        <Gap $w={9} />
        <Ico w={18} h={22}><rect x="1.500" y="8" width="6" height="7" {...S} /><rect x="9.500" y="3" width="6" height="6" {...S} /><path d="M7.500 2h2M15.500 2h2M0 15.500h2M0 7.500h2" {...S} /><path d="M7 6v15l3-4h6z" /></Ico>
        <Gap $w={2} /><Chev w={15} />
        <Grow />
        <Ico w={16} h={18}><path d="M2 3h5v5H2zM9 3h5v5H9zM2 11h5v5H2zM9 11h5v5H9z" /><path d="M0 9.500h16" stroke="#999" /></Ico>
        <Gap $w={11} />
        <Ico w={16} h={18}><path d="M1 2h4v4H1zM1 7h4v4H1zM1 12h4v4H1z" /><path d="M7 5.500h5a3.500 3.500 0 0 1 0 7H8" {...S} strokeWidth="2" /></Ico>
        <Gap $w={3} /><Chev w={14} c="#757575" /><Gap $w={16} />
        <Ico w={12} h={18}><path d="M0 4h2v2H0zM0 9h2v2H0zM0 14h2v2H0zM4 4.500h8v1.200H4zM4 9.500h8v1.200H4zM4 14.500h8v1.200H4z" /></Ico>
        <Gap $w={18} />
      </Control>

      <Body>
        <ToolCol>
          <Strip><Dbl /></Strip>
          <GripWrap><Grip /></GripWrap>
          <ToolGrid>
            {tools.map((t, i) => <ToolCell key={i} $on={t.on} $more={t.m}><Ico w={20} h={20}>{t.i}</Ico></ToolCell>)}
          </ToolGrid>
          <ToolBottom>
            <Ico w={60} h={60}>
              <g transform="translate(-6 -434)">
                <rect x="25.500" y="458.500" width="34" height="34" fill="#000" stroke="#fff" /><rect x="34" y="467" width="17" height="17" fill={C.bg} stroke="#fff" />
                <rect x="6.500" y="439.500" width="35" height="35" fill="#fff" stroke="#333" /><path d="M7.500 473.500L41 440" stroke="#f00" strokeWidth="1.800" />
                <path d="M53 444h4a2 2 0 0 1 2 2v4" {...S} strokeWidth="1.800" /><path d="M51 444l4-4v8zM55 449h8l-4 4z" />
                <rect x="10.500" y="484.500" width="6" height="6" fill="#000" stroke="#fff" /><rect x="12" y="486" width="3" height="3" fill={C.bg} /><rect x="7" y="481" width="7" height="7" fill="#fff" stroke="#000" strokeWidth="1.200" />
              </g>
            </Ico>
            <Trio $mt={5} $h={20} $on={3}>
              <div><Chip $bg="#000" /></div><div><Chip $bg="linear-gradient(90deg,#fff,#111)" /></div><div><Chip $bg="#000"><NoneSwatch s={11} b /></Chip></div>
            </Trio>
            <Trio $mt={5} $h={19} $on={1}>
              <div><Ico w={14} h={14}><circle cx="5.500" cy="5.500" r="4" fill="#777" stroke={C.icon} /><rect x="6" y="6" width="6" height="6" /></Ico></div>
              <div><Ico w={14} h={14}><rect x="7" y="7" width="5" height="5" /><circle cx="5.500" cy="6" r="4.300" fill="#666" stroke={C.icon} strokeWidth="1.300" /></Ico></div>
              <div><Ico w={14} h={14}><circle cx="6.500" cy="6.500" r="4" fill="none" stroke="#707070" strokeWidth="1.200" /><path d="M7 7h4l-3 3H7z" fill="#707070" /></Ico></div>
            </Trio>
            <ScreenMode>
              <Ico w={22} h={16}><path d="M.5 4.500h12v10H.5z" fill="#757575" stroke={C.icon} /><path d="M8.500.5h13v10h-13z" fill="#757575" stroke={C.icon} /><path d="M8 0h14v2.500H8zM0 4h8v2H0z" /></Ico>
              <Ico w={14} h={4}><circle cx="2" cy="2" r="1.700" /><circle cx="7" cy="2" r="1.700" /><circle cx="12" cy="2" r="1.700" /></Ico>
            </ScreenMode>
          </ToolBottom>
        </ToolCol>

        <DocCol>
          <Tabs>
            <Tab $w={240} $on><Label $b={600} $ls={-0.04}>Sans titre - 1* @ 70,71 % (RVB/Aperçu)</Label><CloseX c="#eee" /></Tab>
            <Tab $w={477}><Label $c="#a5a5a5" $b={600} $ls={-0.11}>333815690_754756169196638_1407853612799862683_n.jpg* @ 51,06 % (RVB/Aperçu)</Label><CloseX c="#bbb" /></Tab>
          </Tabs>
          <CanvasRow>
            <Artboard />
            <VScroll><Chev c="#999" dir="up" /><Chev c="#999" /></VScroll>
          </CanvasRow>
          <Status>
            <StatusField $w={69} $ml={3}><Label $ls={-0.3}>70,71%</Label><Chev w={18} /></StatusField>
            <StatusField $w={69} $ml={4}><Label>0°</Label><Chev w={18} /></StatusField>
            <Gap $w={7} />
            <StatusIcon w={14} d="M3 3h1.500v10H3zM10 3v10L5 8z" /><Gap $w={6} />
            <StatusIcon w={10} d="M6 3v10L1 8z" />
            <StatusField $w={60} $ml={3}><Label>1</Label><Chev w={18} /></StatusField>
            <Gap $w={8} />
            <StatusIcon w={10} d="M2 3v10l5-5z" /><Gap $w={5} />
            <StatusIcon w={14} d="M9 3h1.500v10H9zM2 3v10l5-5z" />
            <SelBox><Label $c="#d5d5d5">Sélection</Label></SelBox>
            <Gap $w={6} /><StatusIcon w={12} d="M2 3v10l5-5z" c="#ddd" />
            <HScroll><Chev w={17} c="#aaa" dir="left" /><Gap $w={484} /><Thumb /><Grow /><Chev w={17} c="#aaa" dir="right" /></HScroll>
          </Status>

          <CharPanel>
            <CharTabs>
              <CharTab $w={69} $on $p={5}>
                <Ico w={6} h={10}><path d="M.5 4L3 1l2.500 3M.5 6L3 9l2.500-3" {...S} strokeWidth="1.200" /></Ico>
                <Label $b={700} $s={10.5} $ls={-0.35}>Caractère</Label>
              </CharTab>
              <CharTab $w={48} $p={8}><Label $c="#a5a5a5" $b={600} $s={10.5} $ls={-0.5}>Paragrap</Label></CharTab>
              <CharTab $w={49} $p={8}><Label $c="#a5a5a5" $b={600} $s={10.5} $ls={-0.4}>OpenTyp</Label></CharTab>
              <CharTail><Ico w={11} h={8}><path d="M1 .5l3.500 3.500L1 7.500M6 .5l3.500 3.500L6 7.500" {...S} /></Ico><Gap $w={5} /><VLine $h={11} $c="#bbb" /><Gap $w={7} /><MenuLines /></CharTail>
            </CharTabs>
            <CharBody>
              <Field $w={220}><Seg $p={1}><Magnify s={12} /><Chev w={10} c={C.icon} /><Label $b={600} $ml={2} $ls={-0.3}>Poppins</Label></Seg><Seg $w={18} $l><Chev /></Seg></Field>
              <Field $w={220} $mt={5}><Seg $p={5}><Label $b={600} $ls={-0.4}>Regular</Label></Seg><Seg $w={18} $l><Chev /></Seg></Field>
              <HRule $m="5px 0" />
              <CharRow>
                <Ico w={21} h={20}><text x="0" y="16" fontFamily="Liberation Serif" fontWeight="700" fontSize="12">T</text><text x="6" y="16" fontFamily="Liberation Serif" fontWeight="700" fontSize="19">T</text></Ico>
                <Field $w={82}><Seg $w={17}><Stepper /></Seg><Seg $l $p={3}><Label>60 pt</Label></Seg><Seg $w={19} $l><Chev /></Seg></Field>
                <Gap $w={14} />
                <Ico w={20} h={20}><path d="M3.500 7v10M1 9.500L3.500 7l2.500 2.500M1 14.500L3.500 17l2.500-2.500M6 9.500h11M6 19h11" {...S} strokeWidth="1.200" /><IcoText x={8} y={8.500} s={11}>A</IcoText><IcoText x={8} y={18} s={11}>A</IcoText></Ico>
                <Field $w={82}><Seg $w={18}><Stepper /></Seg><Seg $l $p={3}><Label>(72 pt)</Label></Seg><Seg $w={19} $l><Chev /></Seg></Field>
              </CharRow>
              <CharRow $mt={5}>
                <Ico w={21} h={20}><path d="M.5 3l4 10L10 2.500M7.500 13l4-10h.8l4 10M9 9.500h6M4.500 13L11 1" {...S} strokeWidth="1.300" /><path d="M10 17h7M12 15l-2.500 2L12 19" {...S} strokeWidth="1.200" /></Ico>
                <Field $w={82}><Seg $w={17}><Stepper /></Seg><Seg $l $p={3}><Label>Auto</Label></Seg><Seg $w={19} $l><Chev /></Seg></Field>
                <Gap $w={14} />
                <Ico w={20} h={20}><rect x="0" y="1" width="18" height="12" /><IcoText x={1} y={12} s={12} b={700} c={C.bg}>VA</IcoText><path d="M.5 14v5M17.500 14v5M2 16.500h14M4 14.500l-2 2l2 2M14 14.500l2 2l-2 2" {...S} strokeWidth="1" /></Ico>
                <Field $w={82}><Seg $w={18}><Stepper /></Seg><Seg $l $p={3}><Label>0</Label></Seg><Seg $w={19} $l><Chev /></Seg></Field>
              </CharRow>
              <HRule $m="5px 0 9px" />
              <CharRow>
                <Label $c="#cfcfcf" $ls={-0.12} $b={500} $w={165}>Accrocher au glyphe</Label>
                <Ico w={18} h={16}><rect x=".5" y="1" width="10" height="12.500" {...S} strokeWidth="1" /><IcoText x={1.5} y={12}>Ag</IcoText></Ico>
                <Gap $w={17} />
                <Ico w={16} h={16}><circle cx="8" cy="8" r="6.500" {...S} /><path d="M7 4h2v2H7zM6.500 7H9v4h1v1H6.500v-1h1V8h-1z" /></Ico>
              </CharRow>
              <CharRow $mt={8}>
                <GlyphBtn $ml={0}><Ico w={20} h={18}><IcoText x={2} y={14} s={15} c={G}>Ax</IcoText><path d="M1 15.500h18" stroke={G} /></Ico></GlyphBtn>
                <GlyphBtn $ml={10}><Ico w={20} h={18}><IcoText x={2} y={14} s={15} c={G}>Ax</IcoText><path d="M1 6.500h18" stroke={G} /></Ico></GlyphBtn>
                <GlyphBtn $ml={12}><Ico w={20} h={18}><IcoText x={2} y={13} s={15} c={G}>Ag</IcoText><path d="M1.500 1h17v16h-17z" fill="none" stroke={G} /></Ico></GlyphBtn>
                <GlyphBtn $ml={12} $flat><Ico w={20} h={18}><IcoText x={2} y={14} s={15} c="#757575">Ag</IcoText><path d="M1 9.500h18" stroke="#757575" /></Ico></GlyphBtn>
                <Gap $w={12} /><VLine $h={25} $c="#4a4a4a" />
                <GlyphBtn $ml={12}><Ico w={18} h={18}><IcoText x={3} y={14} s={15} c={G}>A</IcoText><path d="M10 3l5 13" stroke={G} /></Ico></GlyphBtn>
                <GlyphBtn $ml={10}><Ico w={18} h={18}><IcoText x={4} y={15} s={14} c={G}>A</IcoText><rect x="9.500" y="2.500" width="3" height="3" fill="none" stroke={G} /></Ico></GlyphBtn>
              </CharRow>
            </CharBody>
          </CharPanel>
        </DocCol>

        <Dock>
          <Strip $r><Dbl /></Strip>
          {dockGroups.map((g, gi) => (
            <DockGroup key={gi} $h={g.h}>
              <Grip />
              {g.items.map((it, i) => <DockIcon key={i} $on={it.on}><Ico w={19} h={19} vw={20} vh={20}>{it.i}</Ico></DockIcon>)}
            </DockGroup>
          ))}
        </Dock>

        <LayersPanel>
          <Strip $r><Dbl flip /></Strip>
          <PTabs>
            <PTab $w={67}><Label $c="#aaa" $b={600} $s={10.5}>Propriétés</Label></PTab>
            <PTab $w={55} $on><Label $b={700} $s={10.5} $ls={-0.45}>Calques</Label></PTab>
            <PTab $w={81}><Label $c="#aaa" $b={600} $s={10.5} $ls={-0.3}>Bibliothèques</Label></PTab>
            <PTail><MenuLines /></PTail>
          </PTabs>
          <LayerList>
            <LayerRow>
              <Gap $w={3} />
              <Ico w={13} h={10}><path d="M0 5C3 0 10 0 13 5C10 10 3 10 0 5z" /><circle cx="6.500" cy="5" r="2.800" fill="#50677f" /><circle cx="6.500" cy="4.500" r="1.400" /></Ico>
              <Gap $w={4} /><VLine $c="#43566a" /><Gap $w={22} />
              <BlueBar />
              <Chev w={20} dir="right" /><Gap $w={6} />
              <Thumbnail><Ico w={16} h={8}><path d="M0 3h2v-1h3v4H1V5H0zM10 2h2v4h-2zM13 2h3v3h-1v1h-2z" fill="#222" /></Ico></Thumbnail>
              <Label $ml={5} $ls={-0.45}>Calque 1</Label>
              <Grow />
              <VLine $c="#43566a" /><Gap $w={6} />
              <Ico w={9} h={9}><circle cx="4.500" cy="4.500" r="3.500" fill="none" stroke="#ccc" /></Ico><Gap $w={5} />
              <SelDot /><Gap $w={9} />
            </LayerRow>
          </LayerList>
          <LayerFoot>
            <Label $b={600} $c="#ddd" $s={10.5} $ls={-0.4}>1 Calque</Label>
            <FootIcons>
              {[
                <path key="a" d="M8 4H2.500v10h10V9M7 9.500l6.500-7M9 2h5v5" {...S} />,
                <g key="b" {...S}><circle cx="6.500" cy="6.500" r="4.500" /><path d="M10 10l5 5" strokeWidth="2.400" /></g>,
                <g key="c"><path d="M2.500 2.500h8v8h-8z" {...S} /><path d="M7 6h6v8H6z" fill="#8a8a8a" /><rect x="5" y="5" width="5" height="5" /></g>,
                <g key="d" {...S}><path d="M7.500 4.500h8v9h-8zM11.500 6.500v5M9 9h5M0 2.500h1.500v4h4M3.500 4.500l2 2l-2 2" strokeWidth="1.300" /></g>,
                <g key="e" {...S}><path d="M2.500 3.500h10v10h-10zM7.500 5.500v6M4.500 8.500h6" /></g>,
                <g key="f" fill="none" stroke="#777"><path d="M3.500 5.500h8v9h-8zM2 4.500h11M5.500 3.500v-1h4v1M5.500 7v6M7.500 7v6M9.500 7v6" /></g>,
              ].map((n, i) => <Ico key={i} w={16} h={16}>{n}</Ico>)}
            </FootIcons>
          </LayerFoot>
        </LayersPanel>
      </Body>

      <Taskbar>
        <Gap $w={19} />
        <TaskLeft>
          <Ico w={24} h={18}><defs><linearGradient id="cl" x2="0" y2="1"><stop offset="0" stopColor="#7fa4ea" /><stop offset="1" stopColor="#e2ebfc" /></linearGradient></defs><path d="M5 17a5 5 0 0 1-1-9.500A7.500 7.500 0 0 1 17.500 5A6 6 0 0 1 19 17z" fill="url(#cl)" /></Ico>
          <Stack $ml={7}><Label $s={12} $c="#fff">6°C</Label><Label $s={12} $c="#c5cad2">Nuageux</Label></Stack>
        </TaskLeft>
        <TaskCenter>
          <Ico w={23} h={23}><defs><linearGradient id="wn" x2="1" y2="1"><stop offset="0" stopColor="#7ee9fb" /><stop offset="1" stopColor="#1793f3" /></linearGradient></defs><path d="M0 0h11v11H0zM12 0h11v11H12zM0 12h11v11H0zM12 12h11v11H12z" fill="url(#wn)" /></Ico>
          <Pill><Magnify s={15} c="#fff" /><Label $s={12} $c="#fff" $ls={-0.3}>Recherche</Label></Pill>
          <AppRow>
            {apps.map((a, i) => <AppSlot key={i} $dot={a.dot}><Ico w={24} h={24}>{a.i}</Ico></AppSlot>)}
            <AppSlot $on><AiBadge $s={22} $f={13}>Ai</AiBadge></AppSlot>
          </AppRow>
        </TaskCenter>
        <Grow />
        <Ico w={14} h={10}><path d="M1.500 8l5.500-5.500l5.500 5.500" fill="none" stroke="#fff" strokeWidth="1.500" /></Ico>
        <Gap $w={13} />
        <Ico w={17} h={14}><g fill="none" stroke="#fff" strokeWidth="1.300"><path d="M1 5.500a10.500 10.500 0 0 1 15 0M3.500 8a7 7 0 0 1 10 0M5.800 10.300a4 4 0 0 1 5.400 0" /></g><circle cx="8.500" cy="12" r="1.600" fill="#fff" /></Ico>
        <Gap $w={7} />
        <Ico w={17} h={14}><path d="M1 5h2.500L7.500 1.500v11L3.500 9H1z" fill="none" stroke="#fff" strokeWidth="1.200" /><path d="M9.500 4.500a4 4 0 0 1 0 5" fill="none" stroke="#fff" /><path d="M11.500 3a6 6 0 0 1 0 8M13.500 1.500a8 8 0 0 1 0 11" fill="none" stroke="#68758a" /></Ico>
        <Gap $w={7} />
        <Ico w={17} h={14}><rect x="2" y="3.500" width="12.500" height="9" rx="2" fill="none" stroke="#fff" strokeWidth="1.300" /><path d="M5 5.500h7.500v5H4z" fill="#fff" /><rect x="15" y="6" width="1.600" height="4" fill="#fff" /><path d="M4 0L0 5.500h2.500L1.500 9L6 3.500H3.500z" fill="#fff" /></Ico>
        <Stack $r $ml={16}><Label $s={12} $c="#fff" $ls={-0.4}>21:59</Label><Label $s={12} $c="#fff" $ls={-0.1}>03/03/2023</Label></Stack>
        <Badge>4</Badge>
        <Gap $w={20} />
      </Taskbar>
    </Window>
  );
}
